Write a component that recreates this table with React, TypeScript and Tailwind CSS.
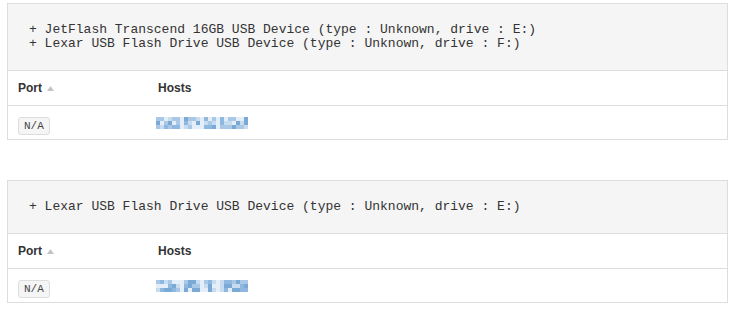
const mono = { fontFamily: '"Liberation Mono", "Courier New", monospace' };

type Panel = {
    devices: string[];
    host: number[][];
};

// pixelated (blurred-out) host address, 4px cells
const shades = ['#ffffff', '#e4eef8', '#c8dcf0', '#a9c8e8', '#8fb8e0', '#7aa9d6'];

function makeGrid(seed: number): number[][] {
    const rows: number[][] = [];
    let s = seed;
    for (let r = 0; r < 3; r++) {
        const row: number[] = [];
        for (let c = 0; c < 23; c++) {
            s = (s * 9301 + 49297) % 233280;
            const gap = c === 6 || c === 11 || c === 15;
            row.push(gap ? 1 : 1 + Math.floor((s / 233280) * 5));
        }
        rows.push(row);
    }
    return rows;
}

const panels: Panel[] = [
    {
        devices: [
            '+ JetFlash Transcend 16GB USB Device (type : Unknown, drive : E:)',
            '+ Lexar USB Flash Drive USB Device (type : Unknown, drive : F:)',
        ],
        host: makeGrid(7),
    },
    {
        devices: ['+ Lexar USB Flash Drive USB Device (type : Unknown, drive : E:)'],
        host: makeGrid(31),
    },
];

function Pixelated({ grid }: { grid: number[][] }) {
    return (
        <svg width={92} height={12} viewBox="0 0 92 12" className="block">
            {grid.map((row, r) =>
                row.map((v, c) => (
                    <rect key={`${r}-${c}`} x={c * 4} y={r * 4} width={4} height={4} fill={shades[v]} />
                ))
            )}
        </svg>
    );
}

function DevicePanel({ panel }: { panel: Panel }) {
    return (
        <div className="border border-[#dddddd] bg-white">
            {/* Device list */}
            <div className="bg-[#f5f5f5] border-b border-[#dddddd] py-[19px] pl-[21px]">
                {panel.devices.map((d) => (
                    <div key={d} style={mono} className="text-[13px] leading-[14px] text-[#333] whitespace-pre">
                        {d}
                    </div>
                ))}
            </div>

            {/* Table header */}
            <div
                className="flex items-center h-[35px] border-b border-[#dddddd] text-[12px] font-bold text-[#333]"
                style={{ fontFamily: '"Liberation Sans", Arial, sans-serif' }}
            >
                <div className="w-[150px] pl-[10px] flex items-center gap-[5px]">
                    Port
                    <svg width={7} height={5} viewBox="0 0 7 5">
                        <path d="M0 5 L3.5 0 L7 5 Z" fill="#c4c4c4" />
                    </svg>
                </div>
                <div>Hosts</div>
            </div>

            {/* Row */}
            <div className="flex items-center h-[33px]">
                <div className="w-[150px] pl-[10px]">
                    <span
                        style={mono}
                        className="inline-block h-[18px] leading-[16px] px-[5px] text-[11px] text-[#444] bg-[#f5f5f5] border border-[#dddddd] rounded-[3px]"
                    >
                        N/A
                    </span>
                </div>
                <div className="-ml-[2px]">
                    <Pixelated grid={panel.host} />
                </div>
            </div>
        </div>
    );
}

export default function App() {
    return (
        <div className="w-[737px] h-[320px] bg-white pt-[3px] pl-[7px]">
            <div className="w-[721px] flex flex-col gap-[40px]">
                {panels.map((p, i) => (
                    <DevicePanel key={i} panel={p} />
                ))}
            </div>
        </div>
    );
}
